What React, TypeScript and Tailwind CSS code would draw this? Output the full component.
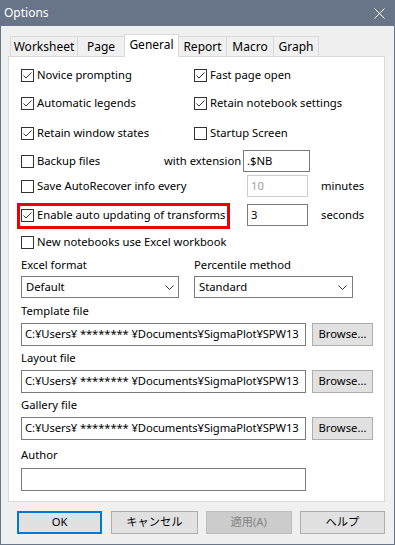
import React from "react";

const FONT = '"Noto Sans", "Noto Sans CJK JP", sans-serif';

function Check({ checked }: { checked: boolean }) {
  return (
    <div className="w-[13px] h-[13px] border border-[#333333] bg-white shrink-0 relative">
      {checked && (
        <svg width="11" height="11" viewBox="0 0 11 11" className="absolute left-0 top-0">
          <polyline points="1.5,5.5 4,8 9.5,2.5" fill="none" stroke="#333333" strokeWidth="1" />
        </svg>
      )}
    </div>
  );
}

function CB({ checked, label, w }: { checked: boolean; label: string; w?: string }) {
  return (
    <div className={`flex items-center gap-[3px] ${w ?? ""}`}>
      <Check checked={checked} />
      <span className="whitespace-nowrap">{label}</span>
    </div>
  );
}

function Chevron() {
  return (
    <svg width="9" height="5" viewBox="0 0 9 5">
      <polyline points="0.5,0.5 4.5,4.5 8.5,0.5" fill="none" stroke="#333333" strokeWidth="1" />
    </svg>
  );
}

const PATH = "C:¥Users¥ ******** ¥Documents¥SigmaPlot¥SPW13";

function FileRow({ label }: { label: string }) {
  return (
    <>
      <div className="h-[16px] leading-[16px] mt-[4px]">{label}</div>
      <div className="flex mt-[4px] h-[23px] items-center">
        <div className="w-[285px] h-[23px] border border-[#7a7a7a] bg-white pl-[3px] flex items-center overflow-hidden whitespace-nowrap">
          <span className="tracking-[-0.1px]">{PATH}</span>
        </div>
        <div className="ml-[6px] w-[61px] h-[23px] border border-[#adadad] bg-[#e1e1e1] flex items-center justify-center">
          Browse...
        </div>
      </div>
    </>
  );
}

export default function App() {
  const tabs = [
    { name: "Worksheet", w: "w-[67px]" },
    { name: "Page", w: "w-[47px]" },
    { name: "General", w: "w-[55px]", sel: true },
    { name: "Report", w: "w-[47px]" },
    { name: "Macro", w: "w-[47px]" },
    { name: "Graph", w: "w-[46px]", last: true },
  ];
  return (
    <div
      className="w-[395px] h-[545px] bg-[#f0f0f0] border-x border-b border-[#687589] flex flex-col text-[11.25px] text-black overflow-hidden"
      style={{ fontFamily: FONT }}
    >
      {/* Title bar */}
      <div className="h-[26px] bg-[#687589] flex items-center justify-between pl-[4px] pr-[10px] shrink-0 -mx-px">
        <span className="text-white text-[12px]">Options</span>
        <svg width="11" height="11" viewBox="0 0 11 11">
          <line x1="0.5" y1="0.5" x2="10.5" y2="10.5" stroke="white" strokeWidth="1" />
          <line x1="10.5" y1="0.5" x2="0.5" y2="10.5" stroke="white" strokeWidth="1" />
        </svg>
      </div>

      <div className="pl-[7px] pr-[9px] pt-[8px] flex flex-col">
        {/* Tabs */}
        <div className="flex items-end h-[22px] pl-[2px] relative z-10 text-[12px]">
          {tabs.map((t) =>
            t.sel ? (
              <div
                key={t.name}
                className={`${t.w} h-[23px] -mb-px bg-white border-x border-t border-[#d9d9d9] flex items-center justify-center pb-[3px]`}
              >
                {t.name}
              </div>
            ) : (
              <div
                key={t.name}
                className={`${t.w} h-[20px] bg-[#f0f0f0] border-t border-[#d9d9d9] ${
                  t.name === "Report" ? "" : "border-l"
                } ${t.last ? "border-r" : ""} flex items-center justify-center`}
              >
                {t.name}
              </div>
            )
          )}
        </div>

        {/* Panel */}
        <div className="w-[377px] h-[446px] bg-white border border-[#d9d9d9] pl-[12px] pt-[7px] flex flex-col">
          <div className="flex h-[22px] items-center">
            <CB checked label="Novice prompting" w="w-[173px]" />
            <CB checked label="Fast page open" />
          </div>
          <div className="flex h-[22px] items-center mt-[6px]">
            <CB checked label="Automatic legends" w="w-[173px]" />
            <CB checked label="Retain notebook settings" />
          </div>
          <div className="flex h-[22px] items-center mt-[8px]">
            <CB checked label="Retain window states" w="w-[173px]" />
            <CB checked={false} label="Startup Screen" />
          </div>
          <div className="flex h-[22px] items-center mt-[6px]">
            <CB checked={false} label="Backup files" w="w-[143px]" />
            <span className="w-[79px] whitespace-nowrap">with extension</span>
            <div className="w-[67px] h-[22px] border border-[#7a7a7a] bg-white px-[3px] flex items-center">.$NB</div>
          </div>
          <div className="flex h-[22px] items-center mt-[3px]">
            <CB checked={false} label="Save AutoRecover info every" w="w-[226px]" />
            <div className="w-[61px] h-[22px] border border-[#cccccc] bg-white px-[3px] flex items-center text-[#a0a0a0]">10</div>
            <span className="ml-[13px]">minutes</span>
          </div>
          <div className="flex h-[22px] items-center mt-[7px] relative">
            <div className="absolute left-[-4px] top-[-1px] w-[213px] h-[26px] border-[3px] border-[#ee0000]" />
            <CB checked label="Enable auto updating of transforms" w="w-[226px]" />
            <div className="w-[61px] h-[22px] border border-[#7a7a7a] bg-white px-[3px] flex items-center">3</div>
            <span className="ml-[13px]">seconds</span>
          </div>
          <div className="flex h-[22px] items-center mt-[5px]">
            <CB checked={false} label="New notebooks use Excel workbook" />
          </div>

          <div className="flex mt-[4px] h-[16px] leading-[16px]">
            <span className="w-[173px]">Excel format</span>
            <span>Percentile method</span>
          </div>
          <div className="flex mt-[3px]">
            <div className="w-[158px] h-[22px] border border-[#7a7a7a] bg-white pl-[4px] pr-[4px] flex items-center justify-between">
              <span>Default</span>
              <Chevron />
            </div>
            <div className="ml-[15px] w-[159px] h-[22px] border border-[#7a7a7a] bg-white pl-[4px] pr-[5px] flex items-center justify-between">
              <span>Standard</span>
              <Chevron />
            </div>
          </div>

          <div className="mt-[1px]" />
          <FileRow label="Template file" />
          <FileRow label="Layout file" />
          <FileRow label="Gallery file" />

          <div className="h-[16px] leading-[16px] mt-[7px]">Author</div>
          <div className="w-[285px] h-[23px] border border-[#7a7a7a] bg-white mt-[5px]" />
        </div>

        {/* Buttons */}
        <div className="flex mt-[9px] pl-[9px]">
          <div className="w-[86px] h-[23px] border-2 border-[#0078d7] bg-[#e1e1e1] flex items-center justify-center">OK</div>
          <div className="ml-[9px] w-[87px] h-[23px] border border-[#adadad] bg-[#e1e1e1] flex items-center justify-center">キャンセル</div>
          <div className="ml-[8px] w-[87px] h-[23px] border border-[#bfbfbf] bg-[#cccccc] text-[#838383] flex items-center justify-center">適用(A)</div>
          <div className="ml-[8px] w-[86px] h-[23px] border border-[#adadad] bg-[#e1e1e1] flex items-center justify-center">ヘルプ</div>
        </div>
      </div>
    </div>
  );
}
